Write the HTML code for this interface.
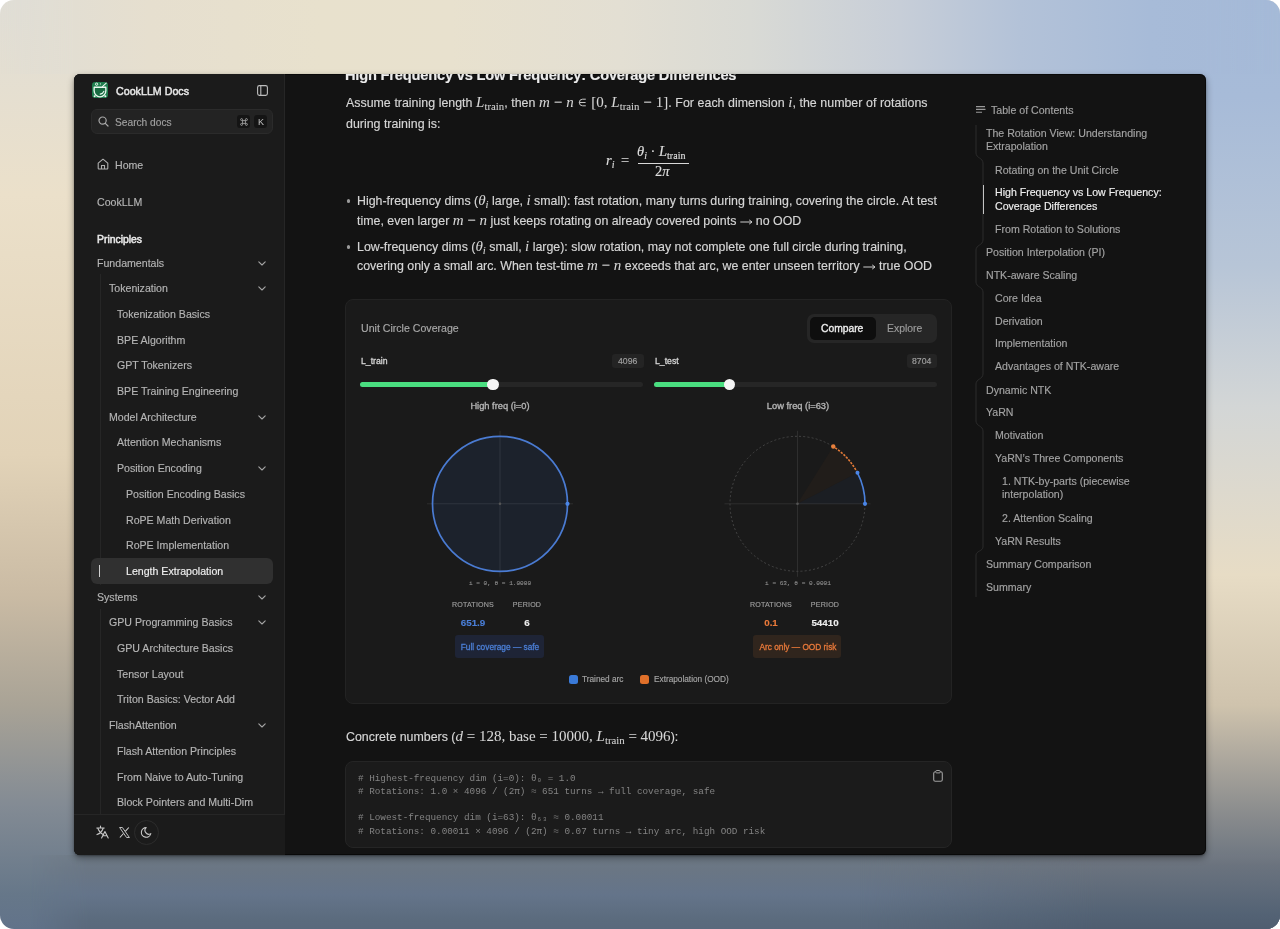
<!DOCTYPE html><html><head><meta charset="utf-8"><style>
html,body{margin:0;padding:0;width:1280px;height:929px;overflow:hidden;background:#ffffff;-webkit-font-smoothing:antialiased;}
.t{will-change:transform;-webkit-text-stroke:0.15px currentColor;}
.t{position:absolute;white-space:nowrap;}
.b{position:absolute;box-sizing:border-box;}
.m{font-family:"Liberation Serif",serif;font-style:italic;font-size:1.21em;line-height:0;-webkit-text-stroke:0.05px currentColor;}
.mr{font-family:"Liberation Serif",serif;font-style:normal;font-size:1.21em;line-height:0;-webkit-text-stroke:0.05px currentColor;}
.sb{font-size:0.87em;position:relative;top:0.3em;font-family:"Liberation Serif",serif;font-style:normal;line-height:0;-webkit-text-stroke:0.05px currentColor;}
.sb2{font-size:0.72em;position:relative;top:0.25em;font-style:normal;line-height:0;}
.tx{-webkit-text-stroke:0.2px currentColor;}
svg{position:absolute;overflow:visible;}
</style></head><body>

<div style="position:absolute;left:0;top:0;width:1280px;height:929px;border-radius:14px;overflow:hidden;">
<div class="b" style="left:0px;top:0px;width:1280px;height:929px;background:linear-gradient(to bottom,#e0ded6 0px,#ebe0ca 195px,#e2d3b8 455px,#cabba4 595px,#a9a396 705px,#838b94 805px,#667789 895px,#62738a 929px);"></div>
<div class="b" style="left:0px;top:0px;width:1280px;height:929px;background:linear-gradient(to bottom,#a5bad8 0px,#a7bbd8 97px,#b7c5d7 265px,#d3d6d6 407px,#e7dcc5 575px,#cfc3ad 705px,#8e8f8f 807px,#6c7580 863px,#5c6979 895px,#4f5d70 929px);-webkit-mask-image:linear-gradient(to right,transparent 0px,transparent 700px,black 1200px);"></div>
<div class="b" style="left:0px;top:0px;width:1280px;height:74px;background:linear-gradient(to right,#dfddd5 0px,#e6dfcf 150px,#e8e1cd 320px,#e8e1ce 450px,#e3dfd3 620px,#d9dad5 750px,#c7ced8 900px,#b3c2d8 1020px,#a7bbd8 1150px,#a5b9d7 1280px);-webkit-mask-image:linear-gradient(to right,transparent 0px,black 74px,black 1206px,transparent 1280px);"></div>
<div class="b" style="left:0px;top:855px;width:1280px;height:74px;background:linear-gradient(to bottom,#6f7a86 0px,#6a7684 15px,#64748a 40px,#5b6b7d 65px,#5a697c 74px);-webkit-mask-image:linear-gradient(to right,transparent 30px,black 90px);"></div>
<div class="b" style="left:860px;top:855px;width:420px;height:74px;background:linear-gradient(to bottom,#727983 0px,#6b737e 10px,#5f6b7a 35px,#536274 60px,#4f5d70 74px);-webkit-mask-image:linear-gradient(to right,transparent 0px,black 240px);"></div>
</div>
<div style="position:absolute;left:74px;top:74px;width:1132px;height:781px;border-radius:6px;overflow:hidden;background:#131313;box-shadow:0 3px 7px rgba(0,0,0,0.38), 0 1px 2px rgba(0,0,0,0.3), inset 0 0 0 1px rgba(0,0,0,0.5);">
<div style="position:absolute;left:-74px;top:-74px;width:1280px;height:929px;">
<div class="b" style="left:74px;top:74px;width:211px;height:781px;background:#1b1b1b;border-right:1px solid #262626;"></div>
<svg style="left:92px;top:82px;" width="16" height="16" viewBox="0 0 16 16"><rect x="0" y="0" width="16" height="16" rx="3.2" fill="#1f7d4e"/>
<path d="M2.2 5.2 H13.8 L13.9 8.6 A5.9 6.2 0 0 1 2.1 8.6 Z" fill="#186a41" stroke="#e9f7ee" stroke-width="1.35" stroke-linejoin="round"/>
<path d="M8.2 12.1 Q11 11.7 11.9 9.3" fill="none" stroke="#e9f7ee" stroke-width="1.1" stroke-linecap="round"/>
<circle cx="4.6" cy="2.2" r="1.15" fill="none" stroke="#e9f7ee" stroke-width="0.95"/>
<circle cx="8.4" cy="1.9" r="0.55" fill="#e9f7ee"/>
<path d="M10.4 4.6 L14.2 1.2" stroke="#e9f7ee" stroke-width="1.1" stroke-linecap="round"/>
<circle cx="2.6" cy="14.2" r="1" fill="#e9f7ee"/><circle cx="13.4" cy="14.2" r="1" fill="#e9f7ee"/></svg>
<div class="t" style="left:116px;top:82.5px;font-size:10.7px;line-height:16px;color:#e8e8e8;font-weight:400;font-family:'Liberation Sans', sans-serif;-webkit-text-stroke:0.45px currentColor;">CookLLM Docs</div>
<svg style="left:257px;top:85px;" width="11" height="11" viewBox="0 0 11 11"><rect x="0.6" y="0.6" width="9.8" height="9.8" rx="1.8" fill="none" stroke="#bdbdbd" stroke-width="1.1"/><line x1="3.8" y1="0.8" x2="3.8" y2="10.2" stroke="#bdbdbd" stroke-width="1.1"/></svg>
<div class="b" style="left:91px;top:109px;width:182px;height:25px;background:#232323;border:1px solid #2b2b2b;border-radius:6px;"></div>
<svg style="left:98px;top:116px;" width="11" height="11" viewBox="0 0 11 11"><circle cx="4.6" cy="4.6" r="3.6" fill="none" stroke="#a8a8a8" stroke-width="1.2"/><line x1="7.3" y1="7.3" x2="10" y2="10" stroke="#a8a8a8" stroke-width="1.2" stroke-linecap="round"/></svg>
<div class="t" style="left:115px;top:115.0px;font-size:10.2px;line-height:15px;color:#a0a0a0;font-weight:400;font-family:'Liberation Sans', sans-serif;">Search docs</div>
<div class="b" style="left:237px;top:115px;width:12.5px;height:13px;background:#141414;border-radius:3px;"></div>
<svg style="left:239.5px;top:117.8px;" width="8" height="8" viewBox="0 0 8 8"><path d="M2.6 2.6 H5.4 V5.4 H2.6 Z M2.6 2.6 V1.6 A1 1 0 1 0 1.6 2.6 H2.6 M5.4 2.6 H6.4 A1 1 0 1 0 5.4 1.6 V2.6 M5.4 5.4 V6.4 A1 1 0 1 0 6.4 5.4 H5.4 M2.6 5.4 H1.6 A1 1 0 1 0 2.6 6.4 V5.4" fill="none" stroke="#a8a8a8" stroke-width="0.85"/></svg>
<div class="b" style="left:254.3px;top:115px;width:12.7px;height:13px;background:#141414;border-radius:3px;"></div>
<div class="t" style="left:257.6px;top:115.0px;font-size:9px;line-height:14px;color:#c4c4c4;font-weight:400;font-family:'Liberation Sans', sans-serif;-webkit-text-stroke:0;">K</div>
<svg style="left:97px;top:158px;" width="12" height="12" viewBox="0 0 12 12"><path d="M1.2 5.2 L6 1.2 L10.8 5.2 V10.3 Q10.8 11 10.1 11 H1.9 Q1.2 11 1.2 10.3 Z" fill="none" stroke="#b0b0b0" stroke-width="1.1" stroke-linejoin="round"/><path d="M4.5 11 V7.5 H7.5 V11" fill="none" stroke="#b0b0b0" stroke-width="1.1"/></svg>
<div class="t" style="left:115px;top:156.5px;font-size:10.6px;line-height:16px;color:#b5b5b5;font-weight:400;font-family:'Liberation Sans', sans-serif;">Home</div>
<div class="t" style="left:97px;top:193.5px;font-size:10.6px;line-height:16px;color:#b5b5b5;font-weight:400;font-family:'Liberation Sans', sans-serif;">CookLLM</div>
<div class="t" style="left:97px;top:232.0px;font-size:10.4px;line-height:16px;color:#e8e8e8;font-weight:400;font-family:'Liberation Sans', sans-serif;-webkit-text-stroke:0.5px currentColor;">Principles</div>
<div class="b" style="left:100px;top:274px;width:1px;height:311px;background:#262626;"></div>
<div class="b" style="left:100px;top:609px;width:1px;height:205px;background:#262626;"></div>
<div class="b" style="left:91px;top:558px;width:182px;height:26px;background:#303030;border-radius:6px;"></div>
<div class="b" style="left:99px;top:565px;width:1.2px;height:12px;background:#d0d0d0;"></div>
<div class="t" style="left:97px;top:254.5px;font-size:10.6px;line-height:16px;color:#b5b5b5;font-weight:400;font-family:'Liberation Sans', sans-serif;-webkit-text-stroke:0.15px currentColor;">Fundamentals</div>
<svg style="left:257.5px;top:260.5px;" width="8" height="5" viewBox="0 0 8 5"><path d="M0.8 0.8 L4 4 L7.2 0.8" fill="none" stroke="#a5a5a5" stroke-width="1.1" stroke-linecap="round" stroke-linejoin="round"/></svg>
<div class="t" style="left:109px;top:279.5px;font-size:10.6px;line-height:16px;color:#b5b5b5;font-weight:400;font-family:'Liberation Sans', sans-serif;-webkit-text-stroke:0.15px currentColor;">Tokenization</div>
<svg style="left:257.5px;top:285.5px;" width="8" height="5" viewBox="0 0 8 5"><path d="M0.8 0.8 L4 4 L7.2 0.8" fill="none" stroke="#a5a5a5" stroke-width="1.1" stroke-linecap="round" stroke-linejoin="round"/></svg>
<div class="t" style="left:117px;top:305.5px;font-size:10.6px;line-height:16px;color:#b5b5b5;font-weight:400;font-family:'Liberation Sans', sans-serif;-webkit-text-stroke:0.15px currentColor;">Tokenization Basics</div>
<div class="t" style="left:117px;top:331.5px;font-size:10.6px;line-height:16px;color:#b5b5b5;font-weight:400;font-family:'Liberation Sans', sans-serif;-webkit-text-stroke:0.15px currentColor;">BPE Algorithm</div>
<div class="t" style="left:117px;top:356.5px;font-size:10.6px;line-height:16px;color:#b5b5b5;font-weight:400;font-family:'Liberation Sans', sans-serif;-webkit-text-stroke:0.15px currentColor;">GPT Tokenizers</div>
<div class="t" style="left:117px;top:382.5px;font-size:10.6px;line-height:16px;color:#b5b5b5;font-weight:400;font-family:'Liberation Sans', sans-serif;-webkit-text-stroke:0.15px currentColor;">BPE Training Engineering</div>
<div class="t" style="left:109px;top:408.5px;font-size:10.6px;line-height:16px;color:#b5b5b5;font-weight:400;font-family:'Liberation Sans', sans-serif;-webkit-text-stroke:0.15px currentColor;">Model Architecture</div>
<svg style="left:257.5px;top:414.5px;" width="8" height="5" viewBox="0 0 8 5"><path d="M0.8 0.8 L4 4 L7.2 0.8" fill="none" stroke="#a5a5a5" stroke-width="1.1" stroke-linecap="round" stroke-linejoin="round"/></svg>
<div class="t" style="left:117px;top:433.5px;font-size:10.6px;line-height:16px;color:#b5b5b5;font-weight:400;font-family:'Liberation Sans', sans-serif;-webkit-text-stroke:0.15px currentColor;">Attention Mechanisms</div>
<div class="t" style="left:117px;top:459.5px;font-size:10.6px;line-height:16px;color:#b5b5b5;font-weight:400;font-family:'Liberation Sans', sans-serif;-webkit-text-stroke:0.15px currentColor;">Position Encoding</div>
<svg style="left:257.5px;top:465.5px;" width="8" height="5" viewBox="0 0 8 5"><path d="M0.8 0.8 L4 4 L7.2 0.8" fill="none" stroke="#a5a5a5" stroke-width="1.1" stroke-linecap="round" stroke-linejoin="round"/></svg>
<div class="t" style="left:126px;top:485.5px;font-size:10.6px;line-height:16px;color:#b5b5b5;font-weight:400;font-family:'Liberation Sans', sans-serif;-webkit-text-stroke:0.15px currentColor;">Position Encoding Basics</div>
<div class="t" style="left:126px;top:511.5px;font-size:10.6px;line-height:16px;color:#b5b5b5;font-weight:400;font-family:'Liberation Sans', sans-serif;-webkit-text-stroke:0.15px currentColor;">RoPE Math Derivation</div>
<div class="t" style="left:126px;top:536.5px;font-size:10.6px;line-height:16px;color:#b5b5b5;font-weight:400;font-family:'Liberation Sans', sans-serif;-webkit-text-stroke:0.15px currentColor;">RoPE Implementation</div>
<div class="t" style="left:126px;top:562.5px;font-size:10.6px;line-height:16px;color:#f0f0f0;font-weight:400;font-family:'Liberation Sans', sans-serif;-webkit-text-stroke:0.15px currentColor;">Length Extrapolation</div>
<div class="t" style="left:97px;top:588.5px;font-size:10.6px;line-height:16px;color:#b5b5b5;font-weight:400;font-family:'Liberation Sans', sans-serif;-webkit-text-stroke:0.15px currentColor;">Systems</div>
<svg style="left:257.5px;top:594.5px;" width="8" height="5" viewBox="0 0 8 5"><path d="M0.8 0.8 L4 4 L7.2 0.8" fill="none" stroke="#a5a5a5" stroke-width="1.1" stroke-linecap="round" stroke-linejoin="round"/></svg>
<div class="t" style="left:109px;top:613.5px;font-size:10.6px;line-height:16px;color:#b5b5b5;font-weight:400;font-family:'Liberation Sans', sans-serif;-webkit-text-stroke:0.15px currentColor;">GPU Programming Basics</div>
<svg style="left:257.5px;top:619.5px;" width="8" height="5" viewBox="0 0 8 5"><path d="M0.8 0.8 L4 4 L7.2 0.8" fill="none" stroke="#a5a5a5" stroke-width="1.1" stroke-linecap="round" stroke-linejoin="round"/></svg>
<div class="t" style="left:117px;top:639.5px;font-size:10.6px;line-height:16px;color:#b5b5b5;font-weight:400;font-family:'Liberation Sans', sans-serif;-webkit-text-stroke:0.15px currentColor;">GPU Architecture Basics</div>
<div class="t" style="left:117px;top:665.5px;font-size:10.6px;line-height:16px;color:#b5b5b5;font-weight:400;font-family:'Liberation Sans', sans-serif;-webkit-text-stroke:0.15px currentColor;">Tensor Layout</div>
<div class="t" style="left:117px;top:690.5px;font-size:10.6px;line-height:16px;color:#b5b5b5;font-weight:400;font-family:'Liberation Sans', sans-serif;-webkit-text-stroke:0.15px currentColor;">Triton Basics: Vector Add</div>
<div class="t" style="left:109px;top:716.5px;font-size:10.6px;line-height:16px;color:#b5b5b5;font-weight:400;font-family:'Liberation Sans', sans-serif;-webkit-text-stroke:0.15px currentColor;">FlashAttention</div>
<svg style="left:257.5px;top:722.5px;" width="8" height="5" viewBox="0 0 8 5"><path d="M0.8 0.8 L4 4 L7.2 0.8" fill="none" stroke="#a5a5a5" stroke-width="1.1" stroke-linecap="round" stroke-linejoin="round"/></svg>
<div class="t" style="left:117px;top:742.5px;font-size:10.6px;line-height:16px;color:#b5b5b5;font-weight:400;font-family:'Liberation Sans', sans-serif;-webkit-text-stroke:0.15px currentColor;">Flash Attention Principles</div>
<div class="t" style="left:117px;top:768.5px;font-size:10.6px;line-height:16px;color:#b5b5b5;font-weight:400;font-family:'Liberation Sans', sans-serif;-webkit-text-stroke:0.15px currentColor;">From Naive to Auto-Tuning</div>
<div class="t" style="left:117px;top:793.5px;font-size:10.6px;line-height:16px;color:#b5b5b5;font-weight:400;font-family:'Liberation Sans', sans-serif;-webkit-text-stroke:0.15px currentColor;">Block Pointers and Multi-Dim</div>
<div class="t" style="left:117px;top:820.0px;font-size:10.6px;line-height:16px;color:#b5b5b5;font-weight:400;font-family:'Liberation Sans', sans-serif;">Support</div>
<div class="b" style="left:74px;top:814px;width:211px;height:41px;background:#1b1b1b;border-top:1px solid #262626;"></div>
<svg style="left:96px;top:825px;" width="13" height="14" viewBox="0 0 13 14"><path d="M0.8 3 H8.2 M4.5 1 V3 M1.8 3.2 Q4 8.5 7.6 9.6 M7.2 3.2 Q5.5 8 1 9.6" fill="none" stroke="#c8c8c8" stroke-width="1.1" stroke-linecap="round"/><path d="M5.6 13 L8.9 6.6 L12.2 13 M6.8 10.8 H11" fill="none" stroke="#c8c8c8" stroke-width="1.1" stroke-linecap="round" stroke-linejoin="round"/></svg>
<svg style="left:118.5px;top:826.5px;" width="11" height="11" viewBox="0 0 11 11"><path d="M0.6 0.5 H3.4 L10.4 10.5 H7.6 Z" fill="none" stroke="#cfcfcf" stroke-width="0.9" stroke-linejoin="round"/><path d="M9.8 0.5 L6.3 4.4 M0.9 10.5 L4.5 6.5" stroke="#cfcfcf" stroke-width="1.1"/></svg>
<div class="b" style="left:134px;top:820px;width:25px;height:25px;border:1px solid #2c2c2c;border-radius:50%;"></div>
<svg style="left:141px;top:826px;" width="12" height="12" viewBox="0 0 12 12"><path d="M9.8 7.6 A4.8 4.8 0 1 1 5.2 1.6 A3.8 3.8 0 0 0 9.8 7.6 Z" fill="none" stroke="#c8c8c8" stroke-width="1.1" stroke-linejoin="round"/></svg>
<div class="t" style="left:345px;top:63.92px;font-size:14.65px;line-height:23px;color:#ececec;font-weight:700;font-family:'Liberation Sans', sans-serif;letter-spacing:-0.2px;">High Frequency vs Low Frequency: Coverage Differences</div>
<div class="t" style="left:345.5px;top:93.20px;font-size:12.4px;line-height:20px;color:#d6d6d6;font-weight:400;font-family:'Liberation Sans', sans-serif;word-spacing:0.2px;">Assume training length <span class="m">L</span><span class="sb">train</span>, then <span class="m">m</span><span class="mr"> − </span><span class="m">n</span><span class="mr"> </span><span style="display:inline-block;width:9.5px;height:9px;position:relative;top:0px;"><svg style="position:absolute;left:0.5px;top:-0.5px" width="9" height="9"><path d="M7.8 1.2 H4.6 A3.3 3.3 0 0 0 4.6 7.8 H7.8 M1.3 4.5 H7.6" fill="none" stroke="#dadada" stroke-width="0.9"/></svg></span><span class="mr"> [0, </span><span class="m">L</span><span class="sb">train</span><span class="mr"> − 1]</span>. For each dimension <span class="m">i</span>, the number of rotations</div>
<div class="t" style="left:345.5px;top:113.80px;font-size:12.4px;line-height:20px;color:#d6d6d6;font-weight:400;font-family:'Liberation Sans', sans-serif;">during training is:</div>
<div class="t" style="left:606px;top:150px;font-size:14.5px;line-height:20px;color:#dedede;font-family:'Liberation Serif',serif;font-style:italic;">r<span style="font-size:10px;position:relative;top:3px;">i</span></div>
<div class="t" style="left:621px;top:150px;font-size:14.5px;line-height:20px;color:#dedede;font-family:'Liberation Serif',serif;">=</div>
<div class="b" style="left:638px;top:162.5px;width:51px;height:1px;background:#d8d8d8;"></div>
<div class="t" style="left:637px;top:141px;font-size:14.5px;line-height:20px;color:#dedede;font-family:'Liberation Serif',serif;"><i>θ</i><span style="font-size:10px;position:relative;top:3px;font-style:italic;">i</span> · <i>L</i><span style="font-size:10px;position:relative;top:3px;">train</span></div>
<div class="t" style="left:655px;top:161px;font-size:14.5px;line-height:20px;color:#dedede;font-family:'Liberation Serif',serif;">2<i>π</i></div>
<div class="b" style="left:346.8px;top:199.4px;width:3.2px;height:3.2px;background:#9a9a9a;border-radius:50%;"></div>
<div class="b" style="left:346.8px;top:245.4px;width:3.2px;height:3.2px;background:#9a9a9a;border-radius:50%;"></div>
<div class="t" style="left:357.3px;top:191.20px;font-size:12.4px;line-height:20px;color:#d6d6d6;font-weight:400;font-family:'Liberation Sans', sans-serif;">High-frequency dims (<span class="m">θ<span class="sb2"><i>i</i></span></span> large, <span class="m">i</span> small): fast rotation, many turns during training, covering the circle. At test</div>
<div class="t" style="left:357.3px;top:210.80px;font-size:12.4px;line-height:20px;color:#d6d6d6;font-weight:400;font-family:'Liberation Sans', sans-serif;">time, even larger <span class="m">m</span><span class="mr"> − </span><span class="m">n</span> just keeps rotating on already covered points <span style="display:inline-block;width:12.5px;height:6px;position:relative;top:-0.5px;"><svg style="position:absolute;left:0;top:0" width="12.5" height="6"><path d="M0.3 3 H11.8 M9.2 0.9 L12 3 L9.2 5.1" stroke="currentColor" fill="none" stroke-width="0.95"/></svg></span> no OOD</div>
<div class="t" style="left:357.3px;top:236.80px;font-size:12.4px;line-height:20px;color:#d6d6d6;font-weight:400;font-family:'Liberation Sans', sans-serif;">Low-frequency dims (<span class="m">θ<span class="sb2"><i>i</i></span></span> small, <span class="m">i</span> large): slow rotation, may not complete one full circle during training,</div>
<div class="t" style="left:357.3px;top:256.00px;font-size:12.4px;line-height:20px;color:#d6d6d6;font-weight:400;font-family:'Liberation Sans', sans-serif;">covering only a small arc. When test-time <span class="m">m</span><span class="mr"> − </span><span class="m">n</span> exceeds that arc, we enter unseen territory <span style="display:inline-block;width:12.5px;height:6px;position:relative;top:-0.5px;"><svg style="position:absolute;left:0;top:0" width="12.5" height="6"><path d="M0.3 3 H11.8 M9.2 0.9 L12 3 L9.2 5.1" stroke="currentColor" fill="none" stroke-width="0.95"/></svg></span> true OOD</div>
<div class="b" style="left:345px;top:299px;width:607px;height:405px;background:#1a1a1a;border:1px solid #232323;border-radius:8px;"></div>
<div class="t" style="left:360.5px;top:319.83px;font-size:10.6px;line-height:17px;color:#a9a9a9;font-weight:400;font-family:'Liberation Sans', sans-serif;">Unit Circle Coverage</div>
<div class="b" style="left:807px;top:314px;width:130px;height:28.5px;background:#262626;border-radius:7px;"></div>
<div class="b" style="left:810px;top:317px;width:66px;height:22.5px;background:#0e0e0e;border-radius:5px;"></div>
<div class="t" style="left:821px;top:320.63px;font-size:10.3px;line-height:16px;color:#ececec;font-weight:400;font-family:'Liberation Sans', sans-serif;-webkit-text-stroke:0.35px currentColor;">Compare</div>
<div class="t" style="left:887.2px;top:320.10px;font-size:10.4px;line-height:17px;color:#9c9c9c;font-weight:400;font-family:'Liberation Sans', sans-serif;">Explore</div>
<div class="t" style="left:360.5px;top:354.19px;font-size:8.7px;line-height:14px;color:#d6d6d6;font-weight:400;font-family:'Liberation Sans', sans-serif;-webkit-text-stroke:0.3px currentColor;">L_train</div>
<div class="t" style="left:654.8px;top:354.19px;font-size:8.7px;line-height:14px;color:#d6d6d6;font-weight:400;font-family:'Liberation Sans', sans-serif;-webkit-text-stroke:0.3px currentColor;">L_test</div>
<div class="b" style="left:612px;top:353.5px;width:31.5px;height:14.5px;background:#242424;border-radius:3px;"></div>
<div class="b" style="left:906.5px;top:353.5px;width:30.5px;height:14.5px;background:#242424;border-radius:3px;"></div>
<div class="t" style="left:617.8px;top:353.99px;font-size:8.7px;line-height:14px;color:#a0a0a0;font-weight:400;font-family:'Liberation Sans', sans-serif;">4096</div>
<div class="t" style="left:911.8px;top:353.99px;font-size:8.7px;line-height:14px;color:#a0a0a0;font-weight:400;font-family:'Liberation Sans', sans-serif;">8704</div>
<div class="b" style="left:360px;top:382px;width:283px;height:5px;background:#262626;border-radius:3px;"></div>
<div class="b" style="left:360px;top:382px;width:133px;height:5px;background:#4ade80;border-radius:3px;"></div>
<div class="b" style="left:487px;top:378.8px;width:11.5px;height:11.5px;background:#f4f4f4;border-radius:50%;"></div>
<div class="b" style="left:654px;top:382px;width:283px;height:5px;background:#262626;border-radius:3px;"></div>
<div class="b" style="left:654px;top:382px;width:75px;height:5px;background:#4ade80;border-radius:3px;"></div>
<div class="b" style="left:723.5px;top:378.8px;width:11.5px;height:11.5px;background:#f4f4f4;border-radius:50%;"></div>
<div class="t" style="left:300px;width:400px;text-align:center;top:399.4px;font-size:9.3px;line-height:14px;color:#b4b4b4;font-weight:400;font-family:'Liberation Sans', sans-serif;-webkit-text-stroke:0.35px currentColor;">High freq (i=0)</div>
<div class="t" style="left:597.5px;width:400px;text-align:center;top:399.4px;font-size:9.3px;line-height:14px;color:#b4b4b4;font-weight:400;font-family:'Liberation Sans', sans-serif;-webkit-text-stroke:0.35px currentColor;">Low freq (i=63)</div>
<svg style="left:0px;top:0px;" width="1" height="1" viewBox="0 0 1 1"><line x1="427" y1="503.8" x2="573" y2="503.8" stroke="#2e2e2e" stroke-width="1"/>
<line x1="500" y1="430.8" x2="500" y2="576.8" stroke="#2e2e2e" stroke-width="1"/>
<circle cx="500" cy="503.8" r="67.5" fill="rgba(59,130,246,0.085)" stroke="#4a7bd2" stroke-width="1.7"/>
<circle cx="500" cy="503.8" r="1.3" fill="#555"/>
<circle cx="567.5" cy="503.8" r="2.1" fill="#4a86e8"/></svg>
<svg style="left:0px;top:0px;" width="1" height="1" viewBox="0 0 1 1"><line x1="724.5" y1="503.8" x2="870.5" y2="503.8" stroke="#2e2e2e" stroke-width="1"/>
<line x1="797.5" y1="430.8" x2="797.5" y2="576.8" stroke="#2e2e2e" stroke-width="1"/>
<circle cx="797.5" cy="503.8" r="67.5" fill="none" stroke="#4a4a4a" stroke-width="0.9" stroke-dasharray="2 2.2"/>
<path d="M797.5 503.8 L865.0 503.8 A67.5 67.5 0 0 0 857.48 472.84 Z" fill="rgba(59,130,246,0.045)"/>
<path d="M797.5 503.8 L857.48 472.84 A67.5 67.5 0 0 0 833.27 446.56 Z" fill="rgba(249,115,22,0.03)"/>
<path d="M865.0 503.8 A67.5 67.5 0 0 0 857.48 472.84" fill="none" stroke="#4a80dc" stroke-width="1.6"/>
<path d="M857.48 472.84 A67.5 67.5 0 0 0 833.27 446.56" fill="none" stroke="#e47a36" stroke-width="1.6" stroke-dasharray="2.2 1.3"/>
<circle cx="797.5" cy="503.8" r="1.3" fill="#555"/>
<circle cx="865.0" cy="503.8" r="2.1" fill="#4a86e8"/>
<circle cx="857.48" cy="472.84" r="2" fill="#4a86e8"/>
<circle cx="833.27" cy="446.56" r="2.2" fill="#e8803c"/></svg>
<div class="t" style="left:300px;width:400px;text-align:center;top:579.0px;font-size:6.1px;line-height:9px;color:#8e8e8e;font-weight:400;font-family:'Liberation Mono', monospace;-webkit-text-stroke:0.1px currentColor;">i = 0, θ = 1.0000</div>
<div class="t" style="left:597.5px;width:400px;text-align:center;top:579.0px;font-size:6.1px;line-height:9px;color:#8e8e8e;font-weight:400;font-family:'Liberation Mono', monospace;-webkit-text-stroke:0.1px currentColor;">i = 63, θ = 0.0001</div>
<div class="t" style="left:273px;width:400px;text-align:center;top:599.5px;font-size:7.1px;line-height:11px;color:#9c9c9c;font-weight:400;font-family:'Liberation Sans', sans-serif;letter-spacing:0.2px;">ROTATIONS</div>
<div class="t" style="left:327px;width:400px;text-align:center;top:599.5px;font-size:7.1px;line-height:11px;color:#9c9c9c;font-weight:400;font-family:'Liberation Sans', sans-serif;letter-spacing:0.2px;">PERIOD</div>
<div class="t" style="left:273px;width:400px;text-align:center;top:614.5px;font-size:9.8px;line-height:15px;color:#4a7fd8;font-weight:700;font-family:'Liberation Sans', sans-serif;">651.9</div>
<div class="t" style="left:327px;width:400px;text-align:center;top:614.5px;font-size:9.8px;line-height:15px;color:#ececec;font-weight:700;font-family:'Liberation Sans', sans-serif;">6</div>
<div class="b" style="left:455.3px;top:635px;width:88.99999999999994px;height:23px;background:#1e2436;border-radius:3px;"></div>
<div class="t" style="left:300px;width:400px;text-align:center;top:640.5px;font-size:8.3px;line-height:12px;color:#4b7fd6;font-weight:400;font-family:'Liberation Sans', sans-serif;-webkit-text-stroke:0.3px currentColor;">Full coverage — safe</div>
<div class="t" style="left:570.5px;width:400px;text-align:center;top:599.5px;font-size:7.1px;line-height:11px;color:#9c9c9c;font-weight:400;font-family:'Liberation Sans', sans-serif;letter-spacing:0.2px;">ROTATIONS</div>
<div class="t" style="left:624.5px;width:400px;text-align:center;top:599.5px;font-size:7.1px;line-height:11px;color:#9c9c9c;font-weight:400;font-family:'Liberation Sans', sans-serif;letter-spacing:0.2px;">PERIOD</div>
<div class="t" style="left:570.5px;width:400px;text-align:center;top:614.5px;font-size:9.8px;line-height:15px;color:#e8793a;font-weight:700;font-family:'Liberation Sans', sans-serif;">0.1</div>
<div class="t" style="left:624.5px;width:400px;text-align:center;top:614.5px;font-size:9.8px;line-height:15px;color:#ececec;font-weight:700;font-family:'Liberation Sans', sans-serif;">54410</div>
<div class="b" style="left:752.8px;top:635px;width:88.40000000000009px;height:23px;background:#30251d;border-radius:3px;"></div>
<div class="t" style="left:597.5px;width:400px;text-align:center;top:640.5px;font-size:8.3px;line-height:12px;color:#e8793a;font-weight:400;font-family:'Liberation Sans', sans-serif;-webkit-text-stroke:0.3px currentColor;">Arc only — OOD risk</div>
<div class="b" style="left:568.5px;top:675px;width:9px;height:9px;background:#3a7ad8;border-radius:2.5px;"></div>
<div class="t" style="left:581.8px;top:672.84px;font-size:8.25px;line-height:13px;color:#a6a6a6;font-weight:400;font-family:'Liberation Sans', sans-serif;">Trained arc</div>
<div class="b" style="left:640.3px;top:675px;width:9px;height:9px;background:#e0702a;border-radius:2.5px;"></div>
<div class="t" style="left:653.5px;top:672.84px;font-size:8.25px;line-height:13px;color:#a6a6a6;font-weight:400;font-family:'Liberation Sans', sans-serif;">Extrapolation (OOD)</div>
<div class="t" style="left:345.6px;top:727.00px;font-size:12.4px;line-height:20px;color:#d6d6d6;font-weight:400;font-family:'Liberation Sans', sans-serif;">Concrete numbers (<span class="m">d</span><span class="mr"> = 128, base = 10000, </span><span class="m">L</span><span class="sb">train</span><span class="mr"> = 4096</span>):</div>
<div class="b" style="left:345px;top:761px;width:607px;height:87px;background:#1b1b1b;border:1px solid #252525;border-radius:8px;"></div>
<div class="t" style="left:357.5px;top:771.20px;font-size:9.3px;line-height:15px;color:#838383;font-weight:400;font-family:'Liberation Mono', monospace;-webkit-text-stroke:0;"># Highest-frequency dim (i=0): θ₀ = 1.0</div>
<div class="t" style="left:357.5px;top:784.40px;font-size:9.3px;line-height:15px;color:#838383;font-weight:400;font-family:'Liberation Mono', monospace;-webkit-text-stroke:0;"># Rotations: 1.0 × 4096 / (2π) ≈ 651 turns → full coverage, safe</div>
<div class="t" style="left:357.5px;top:810.30px;font-size:9.3px;line-height:15px;color:#838383;font-weight:400;font-family:'Liberation Mono', monospace;-webkit-text-stroke:0;"># Lowest-frequency dim (i=63): θ₆₃ ≈ 0.00011</div>
<div class="t" style="left:357.5px;top:823.60px;font-size:9.3px;line-height:15px;color:#838383;font-weight:400;font-family:'Liberation Mono', monospace;-webkit-text-stroke:0;"># Rotations: 0.00011 × 4096 / (2π) ≈ 0.07 turns → tiny arc, high OOD risk</div>
<svg style="left:933px;top:770px;" width="10" height="12" viewBox="0 0 10 12"><rect x="0.7" y="1.8" width="8.6" height="9.5" rx="1.6" fill="none" stroke="#a0a0a0" stroke-width="1.1"/><rect x="2.8" y="0.5" width="4.4" height="2.4" rx="0.8" fill="#181818" stroke="#a0a0a0" stroke-width="1"/></svg>
<svg style="left:976px;top:106px;" width="10" height="7" viewBox="0 0 10 7"><line x1="0" y1="0.6" x2="9" y2="0.6" stroke="#9a9a9a" stroke-width="1.1"/><line x1="0" y1="3.4" x2="9.5" y2="3.4" stroke="#9a9a9a" stroke-width="1.1"/><line x1="0" y1="6.2" x2="6" y2="6.2" stroke="#9a9a9a" stroke-width="1.1"/></svg>
<div class="t" style="left:991.2px;top:101.53px;font-size:10.6px;line-height:17px;color:#a3a3a3;font-weight:400;font-family:'Liberation Sans', sans-serif;">Table of Contents</div>
<div class="t" style="left:985.7px;top:124.63px;font-size:10.6px;line-height:17px;color:#a3a3a3;font-weight:400;font-family:'Liberation Sans', sans-serif;">The Rotation View: Understanding</div>
<div class="t" style="left:985.7px;top:138.23px;font-size:10.6px;line-height:17px;color:#a3a3a3;font-weight:400;font-family:'Liberation Sans', sans-serif;">Extrapolation</div>
<div class="t" style="left:994.6px;top:161.63px;font-size:10.6px;line-height:17px;color:#a3a3a3;font-weight:400;font-family:'Liberation Sans', sans-serif;">Rotating on the Unit Circle</div>
<div class="t" style="left:994.6px;top:184.23px;font-size:10.6px;line-height:17px;color:#f0f0f0;font-weight:400;font-family:'Liberation Sans', sans-serif;">High Frequency vs Low Frequency:</div>
<div class="t" style="left:994.6px;top:198.23px;font-size:10.6px;line-height:17px;color:#f0f0f0;font-weight:400;font-family:'Liberation Sans', sans-serif;">Coverage Differences</div>
<div class="t" style="left:994.6px;top:220.83px;font-size:10.6px;line-height:17px;color:#a3a3a3;font-weight:400;font-family:'Liberation Sans', sans-serif;">From Rotation to Solutions</div>
<div class="t" style="left:985.7px;top:244.33px;font-size:10.6px;line-height:17px;color:#a3a3a3;font-weight:400;font-family:'Liberation Sans', sans-serif;">Position Interpolation (PI)</div>
<div class="t" style="left:985.7px;top:267.13px;font-size:10.6px;line-height:17px;color:#a3a3a3;font-weight:400;font-family:'Liberation Sans', sans-serif;">NTK-aware Scaling</div>
<div class="t" style="left:994.6px;top:290.23px;font-size:10.6px;line-height:17px;color:#a3a3a3;font-weight:400;font-family:'Liberation Sans', sans-serif;">Core Idea</div>
<div class="t" style="left:994.6px;top:313.13px;font-size:10.6px;line-height:17px;color:#a3a3a3;font-weight:400;font-family:'Liberation Sans', sans-serif;">Derivation</div>
<div class="t" style="left:994.6px;top:335.43px;font-size:10.6px;line-height:17px;color:#a3a3a3;font-weight:400;font-family:'Liberation Sans', sans-serif;">Implementation</div>
<div class="t" style="left:994.6px;top:358.03px;font-size:10.6px;line-height:17px;color:#a3a3a3;font-weight:400;font-family:'Liberation Sans', sans-serif;">Advantages of NTK-aware</div>
<div class="t" style="left:985.7px;top:381.83px;font-size:10.6px;line-height:17px;color:#a3a3a3;font-weight:400;font-family:'Liberation Sans', sans-serif;">Dynamic NTK</div>
<div class="t" style="left:985.7px;top:404.23px;font-size:10.6px;line-height:17px;color:#a3a3a3;font-weight:400;font-family:'Liberation Sans', sans-serif;">YaRN</div>
<div class="t" style="left:994.6px;top:427.03px;font-size:10.6px;line-height:17px;color:#a3a3a3;font-weight:400;font-family:'Liberation Sans', sans-serif;">Motivation</div>
<div class="t" style="left:994.6px;top:449.83px;font-size:10.6px;line-height:17px;color:#a3a3a3;font-weight:400;font-family:'Liberation Sans', sans-serif;">YaRN’s Three Components</div>
<div class="t" style="left:1001.5px;top:472.83px;font-size:10.6px;line-height:17px;color:#a3a3a3;font-weight:400;font-family:'Liberation Sans', sans-serif;">1. NTK-by-parts (piecewise</div>
<div class="t" style="left:1001.5px;top:486.43px;font-size:10.6px;line-height:17px;color:#a3a3a3;font-weight:400;font-family:'Liberation Sans', sans-serif;">interpolation)</div>
<div class="t" style="left:1001.5px;top:509.83px;font-size:10.6px;line-height:17px;color:#a3a3a3;font-weight:400;font-family:'Liberation Sans', sans-serif;">2. Attention Scaling</div>
<div class="t" style="left:994.6px;top:532.83px;font-size:10.6px;line-height:17px;color:#a3a3a3;font-weight:400;font-family:'Liberation Sans', sans-serif;">YaRN Results</div>
<div class="t" style="left:985.7px;top:555.83px;font-size:10.6px;line-height:17px;color:#a3a3a3;font-weight:400;font-family:'Liberation Sans', sans-serif;">Summary Comparison</div>
<div class="t" style="left:985.7px;top:578.83px;font-size:10.6px;line-height:17px;color:#a3a3a3;font-weight:400;font-family:'Liberation Sans', sans-serif;">Summary</div>
<svg style="left:0px;top:0px;" width="1" height="1" viewBox="0 0 1 1"><path d="M976 125 V153 C976 158.0 983 158.0 983 163 V240 C983 245.0 976 245.0 976 250 V282 C976 287.0 983 287.0 983 292 V374 C983 379.0 976 379.0 976 384 V421 C976 426.0 983 426.0 983 431 V547 C983 551.0 976 551.0 976 555 V597" fill="none" stroke="#2c2c2c" stroke-width="1"/></svg>
<div class="b" style="left:982.6px;top:185px;width:1.6px;height:29px;background:#c4c4c4;"></div>
</div></div>
</body></html>
